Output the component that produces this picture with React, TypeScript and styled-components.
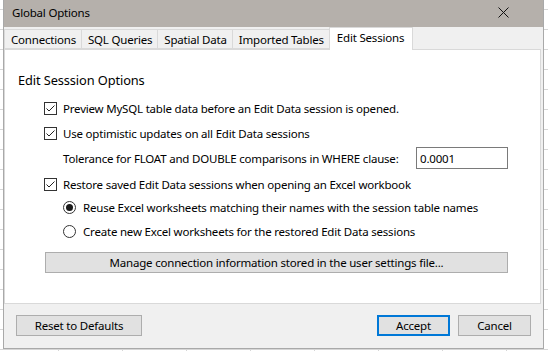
import { createGlobalStyle, styled } from "styled-components";

const GlobalStyle = createGlobalStyle`
  html, body {
    margin: 0;
    padding: 0;
  }
  body {
    width: 548px;
    height: 351px;
    overflow: hidden;
    background-color: #ffffff;
    background-image:
      linear-gradient(to right, #d6d6d6 1px, transparent 1px),
      linear-gradient(to bottom, #d6d6d6 1px, transparent 1px);
    background-size: 64px 20px;
    background-position: 58px 9px;
    font-family: "Noto Sans", "Open Sans", sans-serif;
    font-size: 11.5px;
    letter-spacing: -0.2px;
    color: #000;
  }
`;

const Window = styled.div`
  margin-left: 3px;
  width: 539px;
  height: 348px;
  background: #f0f0f0;
  border: 1px solid #a9a9a9;
  border-top: none;
  display: flex;
  flex-direction: column;
`;

const TitleBar = styled.div`
  height: 27px;
  flex: none;
  box-sizing: border-box;
  background: #b5b0ab;
  display: flex;
  align-items: center;
  justify-content: space-between;
  padding: 0 34px 3px 8px;
`;

const CloseIcon = styled.svg`
  width: 11px;
  height: 11px;
`;

const TabStrip = styled.div`
  display: flex;
  align-items: flex-end;
  height: 22px;
  flex: none;
`;

const Tab = styled.div<{ $active?: boolean }>`
  height: ${(p) => (p.$active ? "23px" : "20px")};
  padding: ${(p) => (p.$active ? "0 8px 3px 7px" : "0 5px 0 6px")};
  box-sizing: border-box;
  display: flex;
  align-items: center;
  background: ${(p) => (p.$active ? "#ffffff" : "#f0f0f0")};
  border: 1px solid #d9d9d9;
  border-bottom: ${(p) => (p.$active ? "none" : "1px solid #d9d9d9")};
  margin-left: -1px;
  margin-bottom: ${(p) => (p.$active ? "-1px" : "0")};
  position: relative;
  z-index: ${(p) => (p.$active ? 1 : 0)};
  &:first-child {
    margin-left: 0;
  }
`;

const Panel = styled.div`
  height: 255px;
  margin-right: 2px;
  background: #ffffff;
  border: 1px solid #d9d9d9;
  padding: 21px 0 0 13px;
  box-sizing: border-box;
  display: flex;
  flex-direction: column;
`;

const Heading = styled.div`
  font-size: 12.8px;
  letter-spacing: -0.1px;
  line-height: 18px;
  margin-bottom: 7px;
`;

const Row = styled.label<{ $indent: number; $top?: number }>`
  display: flex;
  align-items: center;
  gap: ${(p) => (p.$indent > 30 ? 7 : 6)}px;
  height: 24px;
  white-space: nowrap;
  padding-left: ${(p) => p.$indent}px;
  margin-top: ${(p) => p.$top ?? 0}px;
`;

const TolRow = styled.div`
  display: flex;
  align-items: center;
  height: 24px;
  padding-left: 45px;
  margin-top: 1px;
`;

const TolLabel = styled.span`
  width: 353px;
  flex: none;
  white-space: nowrap;
`;

const ValueInput = styled.div`
  width: 92px;
  height: 22px;
  box-sizing: border-box;
  border: 1px solid #7a7a7a;
  padding: 0 3px;
  display: flex;
  align-items: center;
`;

const Box = styled.span`
  width: 13px;
  height: 13px;
  box-sizing: border-box;
  border: 1px solid #333;
  background: #fff;
  flex: none;
  display: flex;
  align-items: center;
  justify-content: center;
`;

const Radio = styled.span<{ $on?: boolean }>`
  width: 13px;
  height: 13px;
  box-sizing: border-box;
  border: 1px solid #333;
  border-radius: 50%;
  background: #fff;
  flex: none;
  display: flex;
  align-items: center;
  justify-content: center;
  &::after {
    content: "";
    width: 7px;
    height: 7px;
    border-radius: 50%;
    background: ${(p) => (p.$on ? "#1a1a1a" : "transparent")};
  }
`;

const WideButton = styled.div`
  margin: 9px 0 0 27px;
  width: 463px;
  height: 21px;
  box-sizing: border-box;
  background: #e1e1e1;
  border: 1px solid #adadad;
  display: flex;
  align-items: center;
  justify-content: center;
`;

const Footer = styled.div`
  flex: 1;
  display: flex;
  align-items: flex-start;
  padding: 11px 12px 0 12px;
`;

const Button = styled.div<{ $width: number; $default?: boolean; $gap?: number }>`
  width: ${(p) => p.$width}px;
  height: 21px;
  box-sizing: border-box;
  background: #e1e1e1;
  border: ${(p) => (p.$default ? "2px solid #0078d7" : "1px solid #adadad")};
  display: flex;
  align-items: center;
  justify-content: center;
  margin-left: ${(p) => p.$gap ?? 0}px;
`;

function Check() {
  return (
    <Box>
      <svg width="11" height="11" viewBox="0 0 11 11">
        <path d="M1.5 5.5 L4 8 L9.5 2.5" fill="none" stroke="#222" strokeWidth="1" />
      </svg>
    </Box>
  );
}

export default function App() {
  return (
    <>
      <GlobalStyle />
      <Window>
        <TitleBar>
          <span>Global Options</span>
          <CloseIcon viewBox="0 0 11 11">
            <path d="M0.5 0.5 L10.5 10.5 M10.5 0.5 L0.5 10.5" stroke="#111" strokeWidth="1" />
          </CloseIcon>
        </TitleBar>
        <TabStrip>
          <Tab>Connections</Tab>
          <Tab>SQL Queries</Tab>
          <Tab>Spatial Data</Tab>
          <Tab>Imported Tables</Tab>
          <Tab $active>Edit Sessions</Tab>
        </TabStrip>
        <Panel>
          <Heading>Edit Sesssion Options</Heading>
          <Row $indent={26}>
            <Check />
            Preview MySQL table data before an Edit Data session is opened.
          </Row>
          <Row $indent={26} $top={1}>
            <Check />
            Use optimistic updates on all Edit Data sessions
          </Row>
          <TolRow>
            <TolLabel>Tolerance for FLOAT and DOUBLE comparisons in WHERE clause:</TolLabel>
            <ValueInput>0.0001</ValueInput>
          </TolRow>
          <Row $indent={26} $top={2}>
            <Check />
            Restore saved Edit Data sessions when opening an Excel workbook
          </Row>
          <Row $indent={45} $top={-1}>
            <Radio $on />
            Reuse Excel worksheets matching their names with the session table names
          </Row>
          <Row $indent={45}>
            <Radio />
            Create new Excel worksheets for the restored Edit Data sessions
          </Row>
          <WideButton>Manage connection information stored in the user settings file...</WideButton>
        </Panel>
        <Footer>
          <Button $width={126}>Reset to Defaults</Button>
          <Button $width={73} $default $gap={235}>Accept</Button>
          <Button $width={73} $gap={8}>Cancel</Button>
        </Footer>
      </Window>
    </>
  );
}
